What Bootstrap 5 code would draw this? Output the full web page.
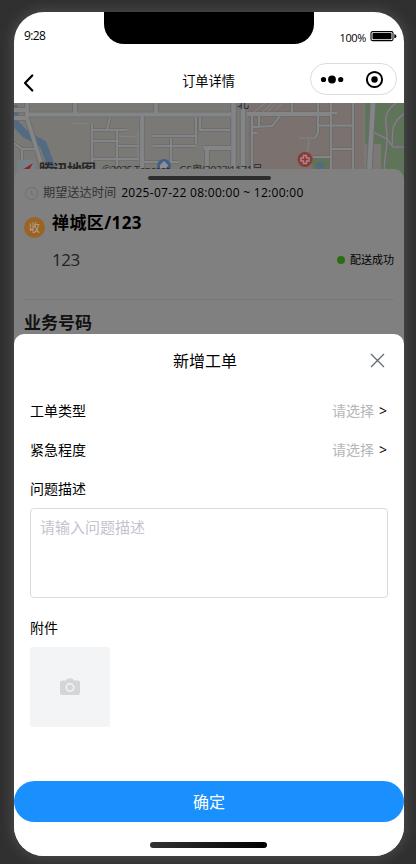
<!DOCTYPE html>
<html lang="zh-CN">
<head>
<meta charset="utf-8">
<meta name="viewport" content="width=device-width, initial-scale=1">
<title>订单详情</title>
<link href="https://cdn.jsdelivr.net/npm/bootstrap@5.3.0/dist/css/bootstrap.min.css" rel="stylesheet">
<style>
body{background:#303030;font-family:"Open Sans","Noto Sans CJK SC",sans-serif;color:#000;font-size:14px;line-height:20px;height:864px;overflow:hidden;padding:12px 12px 8px 14px}
.phone{width:390px;height:844px;border-radius:30px;background:#fff;box-shadow:0 0 12px 3px #484848}
.top{height:91px;flex:none}
.status{height:32px}
.clock{width:90px;padding:14px 0 0 10px;font-size:12px;letter-spacing:-.6px}
.notch{width:210px;height:32px;background:#000;border-radius:0 0 20px 20px}
.power{width:90px;padding:20px 7px 0 0;font-size:11px;letter-spacing:-.35px}
.power svg{margin-top:-3px}
.titlebar{height:59px;padding:19px 7px 8px 9px}
.titlebar .side{width:88px}
.titlebar h1{font-size:13.2px;line-height:20px;padding:8px 4px 0 0}
.capsule{width:87px;height:32px;border:1px solid #dcdcdc}
.map{height:84px;flex:none}
.casing{stroke:#6b6c6c}
.street{stroke:#838587}
.order{height:181px;margin-top:-18px;background:#808080;border-radius:10px 10px 0 0;padding:7px 10px 0 10px;flex:none}
.grip{width:123px;height:4px;background:#2d2d2d}
.when{height:22px;margin:2px 0 7px;font-size:12.2px;line-height:22px;color:#000}
.when .cap{color:#333;margin-right:5px}
.when .stamp{font-size:12px;letter-spacing:.29px}
.who{width:21px;height:21px;background:#9b6427;color:#b5a38f;font-size:11px;margin-top:6px}
.addr{padding-left:7px}
.place{font-size:17px;line-height:24px;letter-spacing:.4px}
.code{font-size:17px;color:#222;letter-spacing:-.5px}
.addr .drop{margin-top:15px}
.state{font-size:11px;gap:5px}
.state i{width:8px;height:8px;background:#2c6d12}
.rule{height:1px;background:#777;margin:29px 0 11px}
.sect{font-size:17px;line-height:24px;color:#111}
.sheet{height:522px;margin-top:-16px;border-radius:10px 10px 0 0;background:#fff;flex:none}
.sheet h2{font-size:16px;line-height:24px}
.sheet-head{height:57px;padding:15px 19px 0 26px}
.sheet-head svg{margin-top:1px}
.form-area{height:390px;padding:0 16px}
.line{height:39px}
.pick{color:#b5b5b5}
.arrow{font-size:14px;width:9px;margin-left:5px}
.desc{height:90px;border:1px solid #dadbdf;border-radius:4px;padding:8px 9px;font-size:15px;line-height:21px;resize:none;display:block}
.desc::placeholder{color:#c2c5ce;opacity:1}
.attach{padding:20px 0 9px}
.upload{width:80px;height:80px;background:#f3f4f6;border-radius:2px}
.confirm{height:41px;background:#1a90ff;color:#fff;font-size:16px;border:0;flex:none}
.homebar{width:117px;height:6px;background:linear-gradient(90deg,#333,#000);margin:20px 0 0 136px}
</style>
</head>
<body>
<main class="phone d-flex flex-column overflow-hidden">
  <header class="top">
    <div class="status d-flex">
      <div class="clock">9:28</div>
      <div class="notch"></div>
      <div class="power d-flex justify-content-end align-items-center gap-1">
        <span>100%</span>
        <svg width="27" height="11" viewBox="0 0 27 11"><rect x="1" y=".6" width="22" height="9" rx="1.5" fill="none" stroke="#000" stroke-width="1.1"/><rect x="2.5" y="2" width="19" height="6.2" rx=".7"/><path d="M24.3 3.2h.6q1.4.6 1.4 2t-1.4 2h-.6z"/></svg>
      </div>
    </div>
    <div class="titlebar d-flex justify-content-between">
      <div class="side pt-2"><svg width="12" height="24" viewBox="0 0 12 24"><path d="M9.3 4.5 2 12l7.300 7.500" fill="none" stroke="#000" stroke-width="2.200" stroke-linecap="round" stroke-linejoin="round"/></svg></div>
      <h1 class="m-0 fw-normal">订单详情</h1>
      <div class="capsule rounded-pill">
        <svg width="85" height="30" viewBox="0 0 85 30" class="d-block"><circle cx="12.500" cy="15.500" r="2.600"/><circle cx="21" cy="15.500" r="3.900"/><circle cx="29.700" cy="15.500" r="2.600"/><circle cx="63.500" cy="15.500" r="7.600" fill="none" stroke="#000" stroke-width="2"/><circle cx="63.500" cy="15.500" r="3.200"/></svg>
      </div>
    </div>
  </header>

  <svg class="map w-100" viewBox="14 103 390 84" preserveAspectRatio="none">
    <defs>
      <path id="major" d="M28 114.500h203M14 110h13M14 118h13M27 103v15l18 58M75 103v11M156 103v11M142 115v60M204 148h27M207 148v28M247 114h83"/>
      <path id="minor" d="M110 117l-3 13M92 124v44M92 130h35M92 141h27M117 130v45M117 146h21M92 159h46M153 136h43M153 146h43M171 138v24M144 162h35M196 117v27M200 117v13h30M14 143l8 6h14M22 149v16M203 130h10M292 103v10M331 103v72M353 103v72M331 149h22M318 103v30l-3 5M318 125.500h35M313 157h18M330 113h7M252 115v60M252 127l20-1 8-10M259 116v10M252 133h5"/>
      <path id="avenue" d="M233.500 103v72M243 103v72M373 103l-4 72"/>
      <path id="trail" d="M396 103c-14 10-10 20-9 31s-3 22-3 41M373 132l14 7 6 8h11M404 114c-14 9-11 19-12 32"/>
    </defs>
    <rect x="14" y="103" width="390" height="84" fill="#7b7975"/>
    <path d="M248 103h116v84H248z" fill="#7b716e"/>
    <path d="M365 103h39v84h-23v-43h-16z" fill="#5f7559"/>
    <path d="M311 159h19v15h-16z" fill="#607359"/>
    <path d="M14 105l1 18 10 11 18 10 9 24" fill="none" stroke="#526b82" stroke-width="7.500" stroke-linejoin="round"/>
    <g fill="none" class="casing"><use href="#minor" stroke-width="3.600"/><use href="#major" stroke-width="5.600"/><use href="#avenue" stroke-width="6.600"/></g>
    <g fill="none" class="street"><use href="#minor" stroke-width="2"/><use href="#major" stroke-width="3.800"/><use href="#avenue" stroke-width="4.600"/></g>
    <path d="M254 112l11-9M262 113l10-10M268 112l8-9M275 110l8-7M71 123l18 1M118 136l18 1M138 130v29M299 138h16M309 139l-2 17" fill="none" stroke="#838587" stroke-width="1"/>
    <use href="#trail" fill="none" stroke="#6f6b70" stroke-width="2.800"/>
    <use href="#trail" fill="none" stroke="#828284" stroke-width="1.200"/>
    <path d="M316 163l4-1 4 1v4l-3 2h-4z" fill="#526b82"/>
    <circle cx="305" cy="159.500" r="7.500" fill="#8b3939"/><path d="M303.500 155.500h3v2.500h2.500v3h-2.500v2.500h-3V161H301v-3h2.500z" fill="none" stroke="#a58c87" stroke-width="1.400"/>
    <rect x="17" y="160" width="18" height="18" rx="4" fill="#788087"/>
    <path d="m22 170 11-7-7 13z" fill="#8f251b"/>
    <circle cx="164" cy="166" r="7" fill="#415f8b"/><path d="m164 161 4 4v5h-8v-5z" fill="#8c8f94"/>
    <g fill="#292929" font-family="Open Sans,Noto Sans CJK SC,sans-serif">
      <text x="237" y="108" font-size="12">北</text>
      <text x="39" y="175" font-size="15" font-weight="700" textLength="57">腾讯地图</text>
      <text x="102" y="173.500" font-size="11" textLength="68">©2025 Tencent</text>
      <text x="179" y="173.500" font-size="11" textLength="84">GS粤(2023)1171号</text>
    </g>
  </svg>

  <section class="order position-relative">
    <div class="grip rounded-pill mx-auto"></div>
    <div class="when d-flex align-items-center">
      <svg width="15" height="15" viewBox="0 0 15 15" class="me-1"><circle cx="7.500" cy="7.500" r="6.200" fill="none" stroke="#747474" stroke-width="1.300"/><path d="M7.500 4v4l2.300 1.500" fill="none" stroke="#747474" stroke-width="1.200"/></svg>
      <span class="cap">期望送达时间</span><span class="stamp">2025-07-22 08:00:00 ~ 12:00:00</span>
    </div>
    <div class="d-flex">
      <span class="who rounded-circle d-flex justify-content-center align-items-center">收</span>
      <div class="addr flex-grow-1">
        <div class="place fw-bold">禅城区/123</div>
        <div class="drop d-flex justify-content-between align-items-center">
          <span class="code">123</span>
          <span class="state d-flex align-items-center"><i class="rounded-circle"></i>配送成功</span>
        </div>
      </div>
    </div>
    <div class="rule"></div>
    <div class="sect fw-bold">业务号码</div>
  </section>

  <section class="sheet position-relative d-flex flex-column">
    <div class="sheet-head d-flex justify-content-between">
      <span></span>
      <h2 class="m-0 fw-normal">新增工单</h2>
      <svg width="15" height="20" viewBox="0 0 15 20"><path d="m1 4 13 13M14 4 1 17" stroke="#646a73" stroke-width="1.300"/></svg>
    </div>
    <div class="form-area">
      <div class="line d-flex justify-content-between align-items-center"><span>工单类型</span><span class="d-flex"><span class="pick">请选择</span><span class="arrow">&gt;</span></span></div>
      <div class="line d-flex justify-content-between align-items-center"><span>紧急程度</span><span class="d-flex"><span class="pick">请选择</span><span class="arrow">&gt;</span></span></div>
      <div class="line d-flex align-items-center">问题描述</div>
      <textarea class="desc w-100" placeholder="请输入问题描述"></textarea>
      <div class="attach">附件</div>
      <div class="upload d-flex justify-content-center align-items-center">
        <svg width="20" height="18" viewBox="0 0 20 18"><path d="M6 2.500 7 1q.4-.6 1-.6h4q.6 0 1 .6l1 1.500h4q2 0 2 2v10.500q0 2-2 2H2q-2 0-2-2V4.500q0-2 2-2z" fill="#d4d5d7"/><circle cx="10" cy="9.500" r="3.700" fill="none" stroke="#f3f4f6" stroke-width="1.500"/></svg>
      </div>
    </div>
    <button class="confirm btn rounded-pill w-100 p-0">确定</button>
    <div class="homebar rounded-pill"></div>
  </section>
</main>
<script src="https://cdn.jsdelivr.net/npm/bootstrap@5.3.0/dist/js/bootstrap.bundle.min.js"></script>
</body>
</html>
